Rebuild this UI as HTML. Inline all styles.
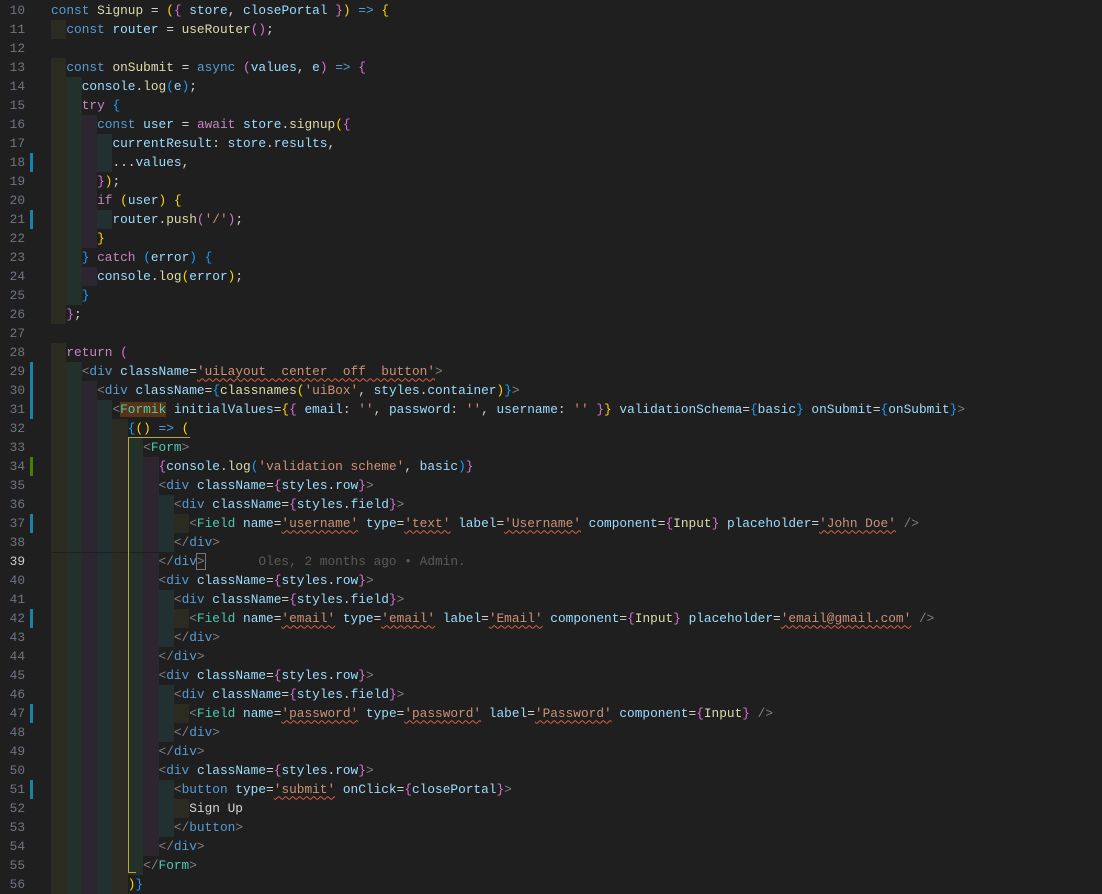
<!DOCTYPE html>
<html><head><meta charset="utf-8"><style>
html,body{margin:0;padding:0;background:#1f1f1f;width:1102px;height:882px;overflow:hidden}
#ed{position:absolute;left:0;top:0.5px;font-family:"Liberation Mono",monospace;font-size:12.8px;color:#d4d4d4}
.l{position:relative;height:19px;line-height:19px;white-space:pre}
.n{position:absolute;left:0;width:25px;text-align:right;color:#6e7681}
.c{position:absolute;left:51px;top:0}
.ind{display:inline-block;height:19px;vertical-align:top;background:repeating-linear-gradient(90deg,#2b2b21 0 15.36px,#24302a 15.36px 30.72px,#2d2530 30.72px 46.08px,#223032 46.08px 61.44px)}
.k{color:#569cd6}.p{color:#c586c0}.v{color:#9cdcfe}.f{color:#dcdcaa}.t{color:#4ec9b0}.g{color:#808080}.tk{color:#569cd6}
.s{color:#ce9178;text-decoration:underline wavy #d9603f;text-underline-offset:3px;text-decoration-thickness:1px}
.y{color:#ffd700}.m{color:#da70d6}.b{color:#179fff}
.mk{position:absolute;left:30px;width:3px;height:19px;background:#1b81a8}
.mkg{background:#487e02}
.cur{border-top:1px solid #2c2c2c;border-bottom:1px solid #2c2c2c;height:17px;line-height:17px}
</style></head><body>
<div id="ed">
<div class="l"><span class="n">10</span><span class="c"><span class="k">const</span> <span class="f">Signup</span> = <span class="y">(</span><span class="m">{</span> <span class="v">store</span>, <span class="v">closePortal</span> <span class="m">}</span><span class="y">)</span> <span class="k">=&gt;</span> <span class="y">{</span></span></div>
<div class="l"><span class="n">11</span><span class="c"><span class="ind" style="width:15.36px"></span><span class="k">const</span> <span class="v">router</span> = <span class="f">useRouter</span><span class="m">()</span>;</span></div>
<div class="l"><span class="n">12</span></div>
<div class="l"><span class="n">13</span><span class="c"><span class="ind" style="width:15.36px"></span><span class="k">const</span> <span class="f">onSubmit</span> = <span class="k">async</span> <span class="m">(</span><span class="v">values</span>, <span class="v">e</span><span class="m">)</span> <span class="k">=&gt;</span> <span class="m">{</span></span></div>
<div class="l"><span class="n">14</span><span class="c"><span class="ind" style="width:30.72px"></span><span class="v">console</span>.<span class="f">log</span><span class="b">(</span><span class="v">e</span><span class="b">)</span>;</span></div>
<div class="l"><span class="n">15</span><span class="c"><span class="ind" style="width:30.72px"></span><span class="p">try</span> <span class="b">{</span></span></div>
<div class="l"><span class="n">16</span><span class="c"><span class="ind" style="width:46.08px"></span><span class="k">const</span> <span class="v">user</span> = <span class="p">await</span> <span class="v">store</span>.<span class="f">signup</span><span class="y">(</span><span class="m">{</span></span></div>
<div class="l"><span class="n">17</span><span class="c"><span class="ind" style="width:61.44px"></span><span class="v">currentResult</span>: <span class="v">store</span>.<span class="v">results</span>,</span></div>
<div class="l"><span class="mk"></span><span class="n">18</span><span class="c"><span class="ind" style="width:61.44px"></span>...<span class="v">values</span>,</span></div>
<div class="l"><span class="n">19</span><span class="c"><span class="ind" style="width:46.08px"></span><span class="m">}</span><span class="y">)</span>;</span></div>
<div class="l"><span class="n">20</span><span class="c"><span class="ind" style="width:46.08px"></span><span class="p">if</span> <span class="y">(</span><span class="v">user</span><span class="y">)</span> <span class="y">{</span></span></div>
<div class="l"><span class="mk"></span><span class="n">21</span><span class="c"><span class="ind" style="width:61.44px"></span><span class="v">router</span>.<span class="f">push</span><span class="m">(</span><span style="color:#ce9178">'/'</span><span class="m">)</span>;</span></div>
<div class="l"><span class="n">22</span><span class="c"><span class="ind" style="width:46.08px"></span><span class="y">}</span></span></div>
<div class="l"><span class="n">23</span><span class="c"><span class="ind" style="width:30.72px"></span><span class="b">}</span> <span class="p">catch</span> <span class="b">(</span><span class="v">error</span><span class="b">)</span> <span class="b">{</span></span></div>
<div class="l"><span class="n">24</span><span class="c"><span class="ind" style="width:46.08px"></span><span class="v">console</span>.<span class="f">log</span><span class="y">(</span><span class="v">error</span><span class="y">)</span>;</span></div>
<div class="l"><span class="n">25</span><span class="c"><span class="ind" style="width:30.72px"></span><span class="b">}</span></span></div>
<div class="l"><span class="n">26</span><span class="c"><span class="ind" style="width:15.36px"></span><span class="m">}</span>;</span></div>
<div class="l"><span class="n">27</span></div>
<div class="l"><span class="n">28</span><span class="c"><span class="ind" style="width:15.36px"></span><span class="p">return</span> <span class="m">(</span></span></div>
<div class="l"><span class="mk"></span><span class="n">29</span><span class="c"><span class="ind" style="width:30.72px"></span><span class="g">&lt;</span><span class="tk">div</span> <span class="v">className</span>=<span class="s">'uiLayout  center  off  button'</span><span class="g">&gt;</span></span></div>
<div class="l"><span class="mk"></span><span class="n">30</span><span class="c"><span class="ind" style="width:46.08px"></span><span class="g">&lt;</span><span class="tk">div</span> <span class="v">className</span>=<span class="b">{</span><span class="f">classnames</span><span class="y">(</span><span style="color:#ce9178">'uiBox'</span>, <span class="v">styles</span>.<span class="v">container</span><span class="y">)</span><span class="b">}</span><span class="g">&gt;</span></span></div>
<div class="l"><span class="mk"></span><span class="n">31</span><span class="c"><span class="ind" style="width:61.44px"></span><span class="g">&lt;</span><span class="t" style="background:#5a3317">Formik</span> <span class="v">initialValues</span>=<span class="y">{</span><span class="m">{</span> <span class="v">email</span>: <span style="color:#ce9178">''</span>, <span class="v">password</span>: <span style="color:#ce9178">''</span>, <span class="v">username</span>: <span style="color:#ce9178">''</span> <span class="m">}</span><span class="y">}</span> <span class="v">validationSchema</span>=<span class="b">{</span><span class="v">basic</span><span class="b">}</span> <span class="v">onSubmit</span>=<span class="b">{</span><span class="v">onSubmit</span><span class="b">}</span><span class="g">&gt;</span></span></div>
<div class="l"><span class="n">32</span><span class="c"><span class="ind" style="width:76.8px"></span><span class="b">{</span><span class="y">()</span> <span class="k">=&gt;</span> <span class="y">(</span></span></div>
<div class="l"><span class="n">33</span><span class="c"><span class="ind" style="width:92.16px"></span><span class="g">&lt;</span><span class="t">Form</span><span class="g">&gt;</span></span></div>
<div class="l"><span class="mk mkg"></span><span class="n">34</span><span class="c"><span class="ind" style="width:107.52px"></span><span class="m">{</span><span class="v">console</span>.<span class="f">log</span><span class="b">(</span><span style="color:#ce9178">'validation scheme'</span>, <span class="v">basic</span><span class="b">)</span><span class="m">}</span></span></div>
<div class="l"><span class="n">35</span><span class="c"><span class="ind" style="width:107.52px"></span><span class="g">&lt;</span><span class="tk">div</span> <span class="v">className</span>=<span class="m">{</span><span class="v">styles</span>.<span class="v">row</span><span class="m">}</span><span class="g">&gt;</span></span></div>
<div class="l"><span class="n">36</span><span class="c"><span class="ind" style="width:122.88px"></span><span class="g">&lt;</span><span class="tk">div</span> <span class="v">className</span>=<span class="m">{</span><span class="v">styles</span>.<span class="v">field</span><span class="m">}</span><span class="g">&gt;</span></span></div>
<div class="l"><span class="mk"></span><span class="n">37</span><span class="c"><span class="ind" style="width:138.24px"></span><span class="g">&lt;</span><span class="t">Field</span> <span class="v">name</span>=<span class="s">'username'</span> <span class="v">type</span>=<span class="s">'text'</span> <span class="v">label</span>=<span class="s">'Username'</span> <span class="v">component</span>=<span class="m">{</span><span class="f">Input</span><span class="m">}</span> <span class="v">placeholder</span>=<span class="s">'John Doe'</span> <span class="g">/&gt;</span></span></div>
<div class="l"><span class="n">38</span><span class="c"><span class="ind" style="width:122.88px"></span><span class="g">&lt;/</span><span class="tk">div</span><span class="g">&gt;</span></span></div>
<div class="l cur"><span class="n" style="color:#cccccc">39</span><span style="position:absolute;left:53px;top:3px;width:10px;height:10px;border-radius:50%;background:#75beff"></span><span class="c"><span class="ind" style="width:107.52px"></span><span class="g">&lt;/</span><span class="tk">div</span><span class="g" style="outline:1px solid #777">&gt;</span>       <span style="color:#5a5a5a">Oles, 2 months ago • Admin.</span></span></div>
<div class="l"><span class="n">40</span><span class="c"><span class="ind" style="width:107.52px"></span><span class="g">&lt;</span><span class="tk">div</span> <span class="v">className</span>=<span class="m">{</span><span class="v">styles</span>.<span class="v">row</span><span class="m">}</span><span class="g">&gt;</span></span></div>
<div class="l"><span class="n">41</span><span class="c"><span class="ind" style="width:122.88px"></span><span class="g">&lt;</span><span class="tk">div</span> <span class="v">className</span>=<span class="m">{</span><span class="v">styles</span>.<span class="v">field</span><span class="m">}</span><span class="g">&gt;</span></span></div>
<div class="l"><span class="mk"></span><span class="n">42</span><span class="c"><span class="ind" style="width:138.24px"></span><span class="g">&lt;</span><span class="t">Field</span> <span class="v">name</span>=<span class="s">'email'</span> <span class="v">type</span>=<span class="s">'email'</span> <span class="v">label</span>=<span class="s">'Email'</span> <span class="v">component</span>=<span class="m">{</span><span class="f">Input</span><span class="m">}</span> <span class="v">placeholder</span>=<span class="s">'email@gmail.com'</span> <span class="g">/&gt;</span></span></div>
<div class="l"><span class="n">43</span><span class="c"><span class="ind" style="width:122.88px"></span><span class="g">&lt;/</span><span class="tk">div</span><span class="g">&gt;</span></span></div>
<div class="l"><span class="n">44</span><span class="c"><span class="ind" style="width:107.52px"></span><span class="g">&lt;/</span><span class="tk">div</span><span class="g">&gt;</span></span></div>
<div class="l"><span class="n">45</span><span class="c"><span class="ind" style="width:107.52px"></span><span class="g">&lt;</span><span class="tk">div</span> <span class="v">className</span>=<span class="m">{</span><span class="v">styles</span>.<span class="v">row</span><span class="m">}</span><span class="g">&gt;</span></span></div>
<div class="l"><span class="n">46</span><span class="c"><span class="ind" style="width:122.88px"></span><span class="g">&lt;</span><span class="tk">div</span> <span class="v">className</span>=<span class="m">{</span><span class="v">styles</span>.<span class="v">field</span><span class="m">}</span><span class="g">&gt;</span></span></div>
<div class="l"><span class="mk"></span><span class="n">47</span><span class="c"><span class="ind" style="width:138.24px"></span><span class="g">&lt;</span><span class="t">Field</span> <span class="v">name</span>=<span class="s">'password'</span> <span class="v">type</span>=<span class="s">'password'</span> <span class="v">label</span>=<span class="s">'Password'</span> <span class="v">component</span>=<span class="m">{</span><span class="f">Input</span><span class="m">}</span> <span class="g">/&gt;</span></span></div>
<div class="l"><span class="n">48</span><span class="c"><span class="ind" style="width:122.88px"></span><span class="g">&lt;/</span><span class="tk">div</span><span class="g">&gt;</span></span></div>
<div class="l"><span class="n">49</span><span class="c"><span class="ind" style="width:107.52px"></span><span class="g">&lt;/</span><span class="tk">div</span><span class="g">&gt;</span></span></div>
<div class="l"><span class="n">50</span><span class="c"><span class="ind" style="width:107.52px"></span><span class="g">&lt;</span><span class="tk">div</span> <span class="v">className</span>=<span class="m">{</span><span class="v">styles</span>.<span class="v">row</span><span class="m">}</span><span class="g">&gt;</span></span></div>
<div class="l"><span class="mk"></span><span class="n">51</span><span class="c"><span class="ind" style="width:122.88px"></span><span class="g">&lt;</span><span class="tk">button</span> <span class="v">type</span>=<span class="s">'submit'</span> <span class="v">onClick</span>=<span class="m">{</span><span class="v">closePortal</span><span class="m">}</span><span class="g">&gt;</span></span></div>
<div class="l"><span class="n">52</span><span class="c"><span class="ind" style="width:138.24px"></span>Sign Up</span></div>
<div class="l"><span class="n">53</span><span class="c"><span class="ind" style="width:122.88px"></span><span class="g">&lt;/</span><span class="tk">button</span><span class="g">&gt;</span></span></div>
<div class="l"><span class="n">54</span><span class="c"><span class="ind" style="width:107.52px"></span><span class="g">&lt;/</span><span class="tk">div</span><span class="g">&gt;</span></span></div>
<div class="l"><span class="n">55</span><span class="c"><span class="ind" style="width:92.16px"></span><span class="g">&lt;/</span><span class="t">Form</span><span class="g">&gt;</span></span></div>
<div class="l"><span class="n">56</span><span class="c"><span class="ind" style="width:76.8px"></span><span class="y">)</span><span class="b">}</span></span></div>
</div>
<div style="position:absolute;left:128px;top:437px;width:1px;height:436px;background:#b8a735"></div>
<div style="position:absolute;left:128px;top:437px;width:62px;height:1px;background:#b8a735"></div>
<div style="position:absolute;left:128px;top:872px;width:8px;height:1px;background:#b8a735"></div>
</body></html>
